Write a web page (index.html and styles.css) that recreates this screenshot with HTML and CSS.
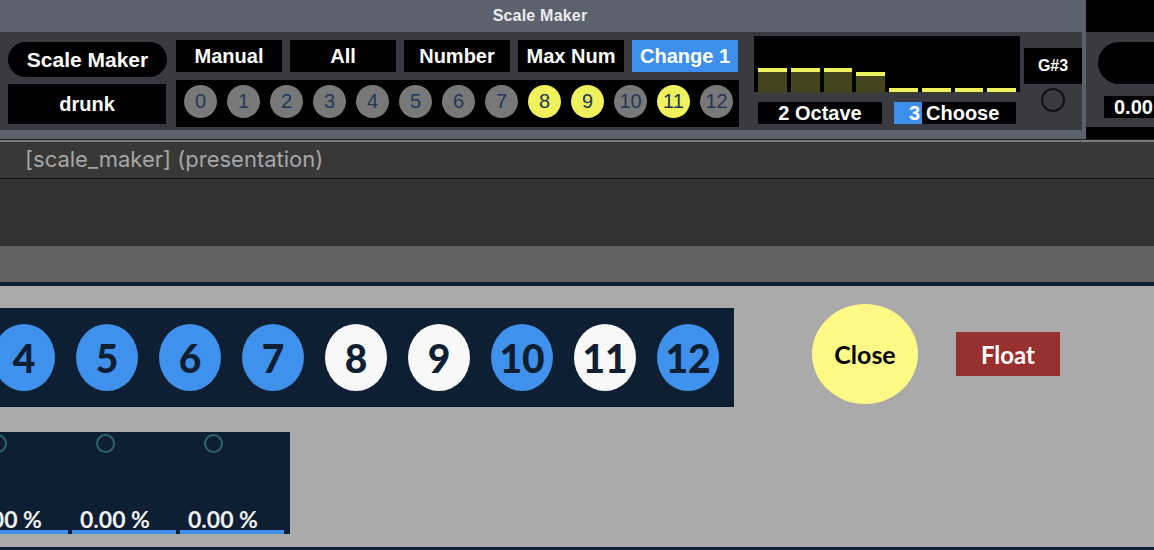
FILE: index.html
```html
<!DOCTYPE html>
<html lang="en">
<head>
    <meta charset="UTF-8">
    <title>[scale_maker] (presentation)</title>
    <link rel="stylesheet" href="styles.css">
</head>
<body>
    <div class="device">
        <div class="dev-main">
            <div class="dev-title">Scale Maker</div>
            <div class="dev-body">
                <div class="col-name">
                    <div class="pill">Scale Maker</div>
                    <div class="box name-box">drunk</div>
                </div>
                <div class="col-ctrl">
                    <div class="btn-row">
                        <div class="btn">Manual</div>
                        <div class="btn">All</div>
                        <div class="btn">Number</div>
                        <div class="btn">Max Num</div>
                        <div class="btn on">Change 1</div>
                    </div>
                    <div class="notes">
                        <span class="note">0</span>
                        <span class="note">1</span>
                        <span class="note">2</span>
                        <span class="note">3</span>
                        <span class="note">4</span>
                        <span class="note">5</span>
                        <span class="note">6</span>
                        <span class="note">7</span>
                        <span class="note lit">8</span>
                        <span class="note lit">9</span>
                        <span class="note">10</span>
                        <span class="note lit">11</span>
                        <span class="note">12</span>
                    </div>
                </div>
                <div class="col-oct">
                    <div class="mslider">
                        <div class="ms-bar" style="height:25px"></div>
                        <div class="ms-bar" style="height:25px"></div>
                        <div class="ms-bar" style="height:25px"></div>
                        <div class="ms-bar" style="height:21px"></div>
                        <div class="ms-bar" style="height:5px"></div>
                        <div class="ms-bar" style="height:5px"></div>
                        <div class="ms-bar" style="height:5px"></div>
                        <div class="ms-bar" style="height:5px"></div>
                    </div>
                    <div class="oct-row">
                        <div class="box num-box">2 Octave</div>
                        <div class="box num-box choose"><span class="num-val">3</span>Choose</div>
                    </div>
                </div>
                <div class="col-note">
                    <div class="box note-name">G#3</div>
                    <div class="ring"></div>
                </div>
            </div>
        </div>
        <div class="dev-side">
            <div class="side-body">
                <div class="side-pill"></div>
                <div class="box side-num">0.00</div>
            </div>
        </div>
    </div>

    <div class="win-title">[scale_maker] (presentation)</div>
    <div class="toolbar"></div>
    <div class="tabstrip"></div>

    <div class="canvas">
        <div class="canvas-row">
            <div class="pc-panel">
                <div class="pc pc-blue">4</div>
                <div class="pc pc-blue">5</div>
                <div class="pc pc-blue">6</div>
                <div class="pc pc-blue">7</div>
                <div class="pc pc-white">8</div>
                <div class="pc pc-white">9</div>
                <div class="pc pc-blue">10</div>
                <div class="pc pc-white">11</div>
                <div class="pc pc-blue">12</div>
            </div>
            <div class="close-btn">Close</div>
            <div class="float-btn">Float</div>
        </div>
        <div class="meters">
            <div class="meter">
                <div class="meter-ring"></div>
                <div class="meter-val">0.00 %</div>
                <div class="meter-bar"></div>
            </div>
            <div class="meter">
                <div class="meter-ring"></div>
                <div class="meter-val">0.00 %</div>
                <div class="meter-bar"></div>
            </div>
            <div class="meter">
                <div class="meter-ring"></div>
                <div class="meter-val">0.00 %</div>
                <div class="meter-bar"></div>
            </div>
        </div>
    </div>
</body>
</html>
```

FILE: styles.css
```css
body {
    margin: 0;
    width: 1154px;
    height: 550px;
    overflow: hidden;
    background: #aaaaaa;
    font-family: "Liberation Sans", Arial, sans-serif;
}

/* top device strip */
.device {
    display: flex;
    height: 139px;
    border-bottom: 1px solid #1c1c1c;
}
.dev-main {
    width: 1086px;
    background: #5c616e;
}
.dev-title {
    height: 32px;
    line-height: 32px;
    padding-right: 6px;
    text-align: center;
    color: #ececec;
    font-weight: bold;
    font-size: 16px;
    letter-spacing: 0.2px;
}
.dev-body {
    width: 1082px;
    height: 98px;
    box-sizing: border-box;
    padding-left: 8px;
    background: #393b40;
    display: flex;
    align-items: flex-start;
}
.box {
    background: #000;
    color: #fff;
    font-weight: bold;
    display: flex;
    align-items: center;
    justify-content: center;
}
.col-name {
    width: 159px;
    padding-top: 10px;
}
.pill {
    height: 35px;
    border-radius: 18px;
    background: #000;
    color: #fff;
    font-weight: bold;
    font-size: 21px;
    display: flex;
    align-items: center;
    justify-content: center;
}
.name-box {
    width: 158px;
    height: 40px;
    margin-top: 7px;
    font-size: 20px;
}
.col-ctrl {
    margin-left: 9px;
    padding-top: 8px;
}
.btn-row {
    display: flex;
    gap: 8px;
}
.btn {
    width: 106px;
    height: 32px;
    background: #000;
    color: #fff;
    font-weight: bold;
    font-size: 20px;
    display: flex;
    align-items: center;
    justify-content: center;
}
.btn.on {
    background: #3e8fe9;
}
.notes {
    margin-top: 8px;
    width: 563px;
    height: 47px;
    box-sizing: border-box;
    padding: 5px 0 0 8px;
    background: #000;
    display: flex;
    gap: 10px;
    align-items: flex-start;
}
.note {
    width: 33px;
    height: 33px;
    border-radius: 50%;
    background: #787878;
    color: #22375a;
    font-size: 20px;
    display: flex;
    align-items: center;
    justify-content: center;
}
.note.lit {
    background: #eff25c;
}
.col-oct {
    margin-left: 15px;
    padding-top: 4px;
}
.mslider {
    width: 266px;
    height: 56px;
    box-sizing: border-box;
    padding: 0 4px;
    background: #000;
    display: flex;
    align-items: flex-end;
    gap: 4px;
}
.ms-bar {
    flex: 1;
    margin-bottom: -1px;
    box-sizing: border-box;
    background: #45451d;
    border-top: 4px solid #eef25c;
}
.oct-row {
    display: flex;
    gap: 12px;
    margin-top: 10px;
    padding-left: 4px;
}
.num-box {
    width: 124px;
    height: 22px;
    font-size: 20px;
}
.num-box.choose {
    width: 122px;
    justify-content: flex-start;
}
.num-val {
    width: 28px;
    height: 22px;
    line-height: 22px;
    box-sizing: border-box;
    padding-right: 2px;
    margin-right: 4px;
    text-align: right;
    background: #3e8fe9;
}
.col-note {
    margin-left: 4px;
    padding-top: 16px;
    width: 58px;
    display: flex;
    flex-direction: column;
    align-items: center;
}
.note-name {
    width: 58px;
    height: 36px;
    font-size: 16px;
}
.ring {
    margin-top: 4px;
    width: 24px;
    height: 24px;
    box-sizing: border-box;
    border: 2px solid #111;
    border-radius: 50%;
}
.dev-side {
    flex: 1;
    background: #000;
    padding-top: 32px;
    overflow: hidden;
}
.side-body {
    height: 95px;
    box-sizing: border-box;
    padding: 10px 0 0 12px;
    background: #393b40;
}
.side-pill {
    height: 42px;
    border-radius: 21px 0 0 21px;
    background: #000;
}
.side-num {
    margin: 12px 0 0 6px;
    height: 22px;
    padding-left: 10px;
    justify-content: flex-start;
    font-size: 20px;
    white-space: nowrap;
}

/* window chrome */
.win-title {
    height: 36px;
    line-height: 35px;
    border-top: 2px solid #7a7a7a;
    border-bottom: 1px solid #0c0c0c;
    background: #383838;
    padding-left: 25px;
    color: #a6a6a6;
    font-family: Inter, "Noto Sans", sans-serif;
    font-size: 22px;
}
.toolbar {
    height: 67px;
    background: #333333;
}
.tabstrip {
    height: 36px;
    background: #626262;
}

/* presentation canvas */
.canvas {
    height: 261px;
    border-top: 4px solid #0e1f33;
    border-bottom: 3px solid #0e1f33;
    background: #aaaaaa;
    overflow: hidden;
    font-family: Lato, "Liberation Sans", sans-serif;
}
.canvas-row {
    display: flex;
    align-items: flex-start;
    padding-top: 18px;
}
.pc-panel {
    flex: none;
    margin-left: -22px;
    margin-top: 4px;
    height: 99px;
    box-sizing: border-box;
    padding: 16px 15px;
    background: #0e1f33;
    display: flex;
    gap: 21px;
}
.pc {
    flex: 0 0 62px;
    height: 67px;
    border-radius: 50%;
    color: #0e1f33;
    font-weight: 900;
    font-size: 39px;
    display: flex;
    align-items: center;
    justify-content: center;
}
.pc-blue { background: #3f91ec; }
.pc-white { background: #f8f8f8; }
.close-btn {
    flex: none;
    margin-left: 78px;
    width: 106px;
    height: 100px;
    border-radius: 50%;
    background: #fffa86;
    color: #000;
    font-weight: bold;
    font-size: 25px;
    display: flex;
    align-items: center;
    justify-content: center;
}
.float-btn {
    flex: none;
    margin-left: 38px;
    margin-top: 28px;
    width: 104px;
    height: 44px;
    background: #993030;
    color: #fff;
    font-weight: bold;
    font-size: 24px;
    display: flex;
    align-items: center;
    justify-content: center;
}
.meters {
    display: flex;
    gap: 4px;
    width: fit-content;
    height: 102px;
    margin: 25px 0 0 -40px;
    padding: 0 6px 0 4px;
    background: #0e1f33;
}
.meter {
    width: 104px;
    display: flex;
    flex-direction: column;
}
.meter-ring {
    margin: 2px 0 0 24px;
    width: 19px;
    height: 19px;
    box-sizing: border-box;
    border: 2px solid #2c6569;
    border-radius: 50%;
}
.meter-val {
    margin-top: auto;
    padding-left: 8px;
    color: #f2f2f2;
    font-weight: bold;
    font-size: 23px;
    line-height: 22px;
}
.meter-bar {
    height: 4px;
    background: #3f8fe8;
}
```
